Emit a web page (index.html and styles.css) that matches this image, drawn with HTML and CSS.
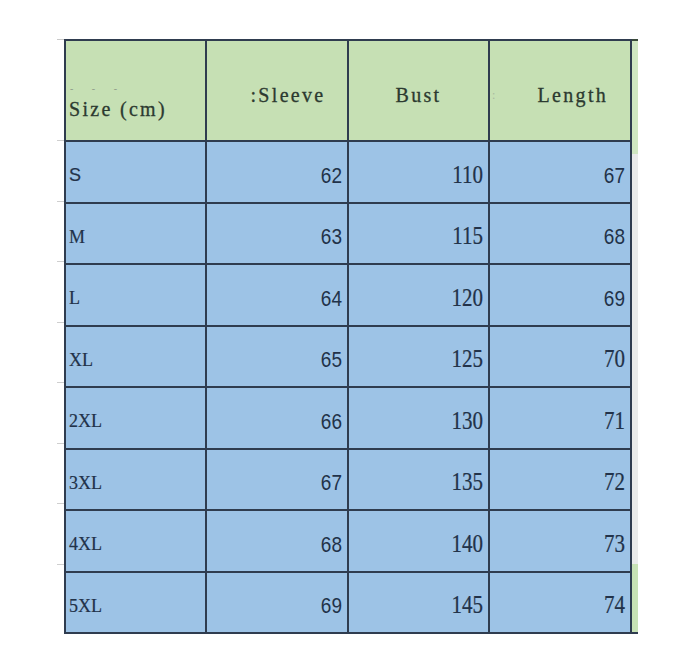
FILE: index.html
```html
<!DOCTYPE html>
<html lang="en">
<head>
<meta charset="utf-8">
<title>Size chart</title>
<link rel="stylesheet" href="styles.css">
</head>
<body>
<div class="wrap">
  <div class="gutter">
    <span></span><span></span><span></span><span></span><span></span>
    <span></span><span></span><span></span><span></span>
  </div>
  <div class="sheet">
    <div class="hd hd-size"><span class="dashes">- - -</span><span>Size (cm)</span></div>
    <div class="hd hd-sleeve"><span>:Sleeve</span></div>
    <div class="hd hd-bust"><span>Bust</span></div>
    <div class="hd hd-length"><span class="faint">:</span><span>Length</span></div>

    <div class="c lbl sans"><span>S</span></div>
    <div class="c num sans"><span>62</span></div>
    <div class="c num serif"><span>110</span></div>
    <div class="c num sans"><span>67</span></div>

    <div class="c lbl"><span>M</span></div>
    <div class="c num sans"><span>63</span></div>
    <div class="c num serif"><span>115</span></div>
    <div class="c num sans"><span>68</span></div>

    <div class="c lbl"><span>L</span></div>
    <div class="c num sans"><span>64</span></div>
    <div class="c num serif"><span>120</span></div>
    <div class="c num sans"><span>69</span></div>

    <div class="c lbl"><span>XL</span></div>
    <div class="c num sans"><span>65</span></div>
    <div class="c num serif"><span>125</span></div>
    <div class="c num serif"><span>70</span></div>

    <div class="c lbl"><span>2XL</span></div>
    <div class="c num sans"><span>66</span></div>
    <div class="c num serif"><span>130</span></div>
    <div class="c num serif"><span>71</span></div>

    <div class="c lbl"><span>3XL</span></div>
    <div class="c num sans"><span>67</span></div>
    <div class="c num serif"><span>135</span></div>
    <div class="c num serif"><span>72</span></div>

    <div class="c lbl"><span>4XL</span></div>
    <div class="c num sans"><span>68</span></div>
    <div class="c num serif"><span>140</span></div>
    <div class="c num serif"><span>73</span></div>

    <div class="c lbl"><span>5XL</span></div>
    <div class="c num sans"><span>69</span></div>
    <div class="c num serif"><span>145</span></div>
    <div class="c num serif"><span>74</span></div>
  </div>
  <div class="strip"></div>
</div>
</body>
</html>
```
FILE: styles.css
```css
html, body {
  margin: 0;
  background: #ffffff;
}
body {
  padding: 39px 0 0 57px;
  font-family: "Liberation Serif", serif;
  color: #223249;
}
.wrap {
  display: flex;
  align-items: flex-start;
}
.gutter {
  width: 7px;
  display: grid;
  grid-template-rows: 1px 100px repeat(4, 61px 60px);
  border-top: 1px solid #c9c9c9;
}
.gutter span {
  border-bottom: 1px solid #cfcfcf;
}
.gutter span:first-child {
  border-bottom: none;
}
.sheet {
  display: grid;
  grid-template-columns: 139px 140px 139px 140px;
  grid-template-rows: 99px repeat(4, 60px 59px);
  gap: 2px;
  padding: 2px;
  background: #2f3c4f;
}
.strip {
  width: 6px;
  height: 591px;
  border-top: 2px solid #3a4a3a;
  border-bottom: 2px solid #2f3c4f;
  background: linear-gradient(to bottom, #cfe6c1 0, #cfe6c1 113px, #e9eaea 113px, #e9eaea 523px, #c7e1b5 523px, #c7e1b5 100%);
}
.hd {
  background: #c6e0b4;
  font-family: "Liberation Serif", serif;
  font-size: 20px;
  letter-spacing: 2.3px;
  line-height: 1;
  color: #2c3a30;
  -webkit-text-stroke: 0.3px #2c3a30;
  display: flex;
  align-items: center;
  justify-content: center;
  padding-top: 9px;
  box-sizing: border-box;
}
.hd-size {
  flex-direction: column;
  align-items: flex-start;
  justify-content: flex-end;
  padding: 0 0 21px 3px;
}
.dashes {
  font-size: 10px;
  color: #8d9a88;
  -webkit-text-stroke: 0;
  letter-spacing: 8px;
  margin: 0 0 5px 1px;
}
.hd-sleeve {
  padding-left: 22px;
}
.hd-length {
  padding-left: 20px;
}
.faint {
  color: #a9b8a0;
  -webkit-text-stroke: 0;
  font-size: 12px;
  margin-right: 40px;
  margin-left: -40px;
}
.c {
  background: #9dc3e6;
  display: flex;
  align-items: center;
  padding-top: 6px;
  box-sizing: border-box;
  line-height: 1;
}
.c span {
  display: inline-block;
}
.lbl {
  justify-content: flex-start;
  padding-left: 3px;
  font-size: 18px;
  font-family: "Liberation Serif", serif;
  -webkit-text-stroke: 0.2px #223249;
}
.lbl.sans {
  font-family: "Liberation Sans", sans-serif;
}
.num {
  justify-content: flex-end;
  padding-right: 5px;
}
.num.sans span {
  font-family: "Liberation Sans", sans-serif;
  font-size: 19px;
  transform: scaleY(1.15);
}
.num.serif span {
  font-family: "Liberation Serif", serif;
  font-size: 21px;
  transform: scaleY(1.18);
  -webkit-text-stroke: 0.2px #223249;
}
```
